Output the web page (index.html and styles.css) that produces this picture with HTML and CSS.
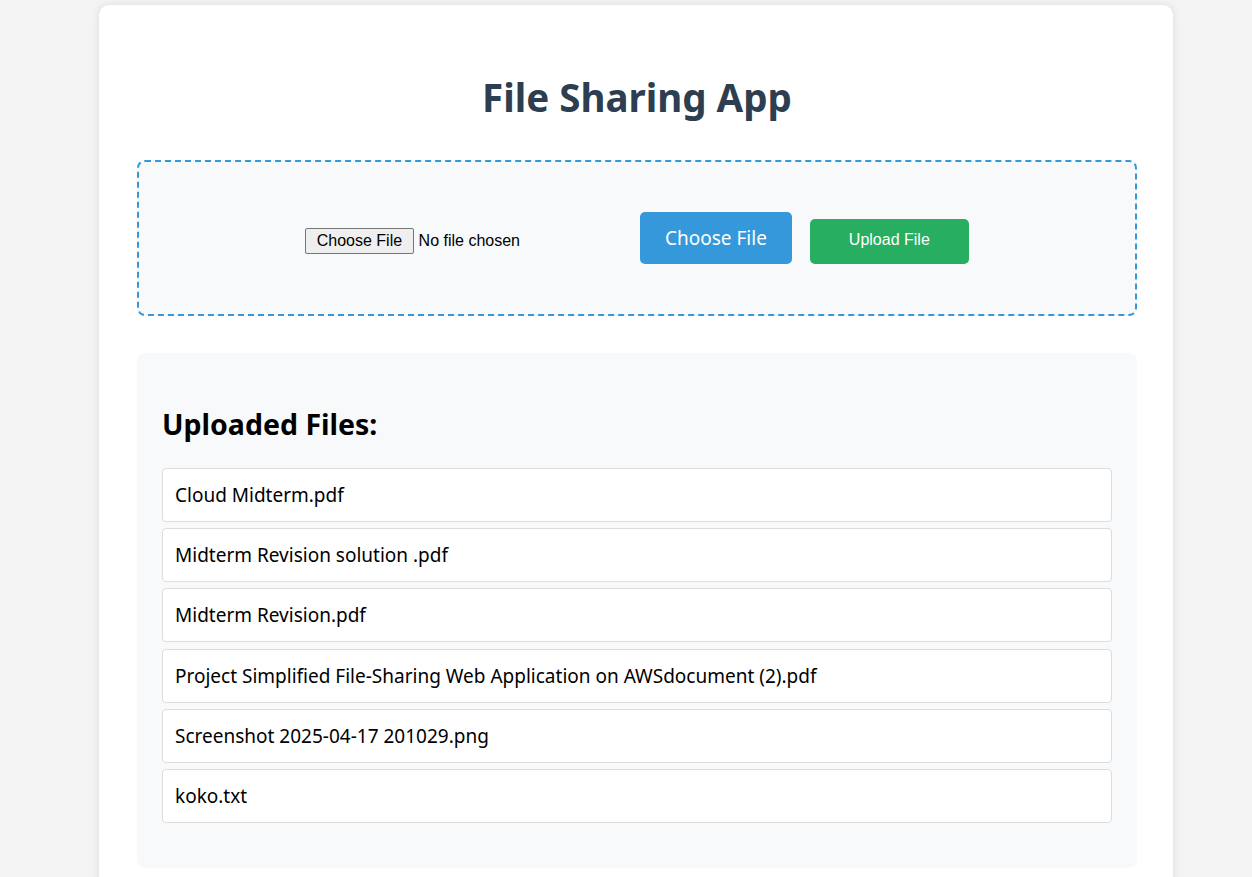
FILE: index.html
```html
<!DOCTYPE html>
<html lang="en">
<head>
<meta charset="utf-8">
<title>File Sharing App</title>
<link rel="stylesheet" href="styles.css">
</head>
<body>
<div class="container">
  <h1 class="title">File Sharing App</h1>
  <div class="upload-area">
    <span class="file-input"><span class="file-btn">Choose File</span><span class="file-status">No file chosen</span></span>
    <span class="choose-label">Choose File</span>
    <button class="upload-btn">Upload File</button>
  </div>
  <div class="files">
    <h2 class="files-title">Uploaded Files:</h2>
    <ul class="file-list">
      <li class="file-item">Cloud Midterm.pdf</li>
      <li class="file-item">Midterm Revision solution .pdf</li>
      <li class="file-item">Midterm Revision.pdf</li>
      <li class="file-item">Project Simplified File-Sharing Web Application on AWSdocument (2).pdf</li>
      <li class="file-item">Screenshot 2025-04-17 201029.png</li>
      <li class="file-item">koko.txt</li>
    </ul>
  </div>
</div>
</body>
</html>
```

FILE: styles.css
```css
html, body {
  margin: 0;
  padding: 0;
}
body {
  background: #f4f4f4;
  font-family: "Noto Sans", "Open Sans", sans-serif;
  padding: 5px 0 0 20px;
}
.container {
  width: 1074px;
  box-sizing: border-box;
  margin: 0 auto;
  background: #fff;
  border-radius: 10px;
  box-shadow: 0 0 10px rgba(0, 0, 0, 0.1);
  padding: 37px 36px 0 38px;
  overflow: hidden;
  height: 900px;
}
.title {
  margin: 29px 0 37px;
  text-align: center;
  color: #2c3e50;
  font-size: 38.5px;
  font-weight: 700;
  line-height: 52px;
}
.upload-area {
  border: 2px dashed #3498db;
  border-radius: 8px;
  background: #f8f9fa;
  height: 156px;
  box-sizing: border-box;
  display: flex;
  justify-content: center;
  align-items: baseline;
  padding-top: 50px;
}
.file-input {
  font-family: "Liberation Sans", Arial, sans-serif;
  font-size: 16px;
  color: #000;
  margin-right: 120px;
  position: relative;
  top: 1px;
}
.file-btn {
  display: inline-block;
  background: #efefef;
  border: 1px solid #767676;
  border-radius: 2px;
  padding: 3px 10.5px 3px;
  line-height: 18px;
}
.file-status {
  margin-left: 5px;
}
.choose-label {
  display: inline-block;
  background: #3498db;
  color: #fff;
  font-size: 19px;
  padding: 12px 25px;
  line-height: 28px;
  border-radius: 5px;
  margin-right: 18px;
}
.upload-btn {
  font-family: "Liberation Sans", Arial, sans-serif;
  font-size: 16px;
  background: #27ae60;
  color: #fff;
  border: none;
  border-radius: 5px;
  padding: 12px 39px 15px;
  line-height: 18px;
}
.files {
  margin-top: 37px;
  background: #f8f9fa;
  border-radius: 8px;
  padding: 36px 25px 39px;
}
.files-title {
  margin: 16px 0 25px;
  font-size: 28.5px;
  font-weight: 700;
  line-height: 38px;
  color: #000;
}
.file-list {
  list-style: none;
  margin: 0;
  padding: 0;
}
.file-item {
  background: #fff;
  border: 1px solid #ddd;
  border-radius: 4px;
  padding: 15px 12px;
  line-height: 22px;
  font-size: 19px;
  color: #000;
  margin-bottom: 6.2px;
}
```
